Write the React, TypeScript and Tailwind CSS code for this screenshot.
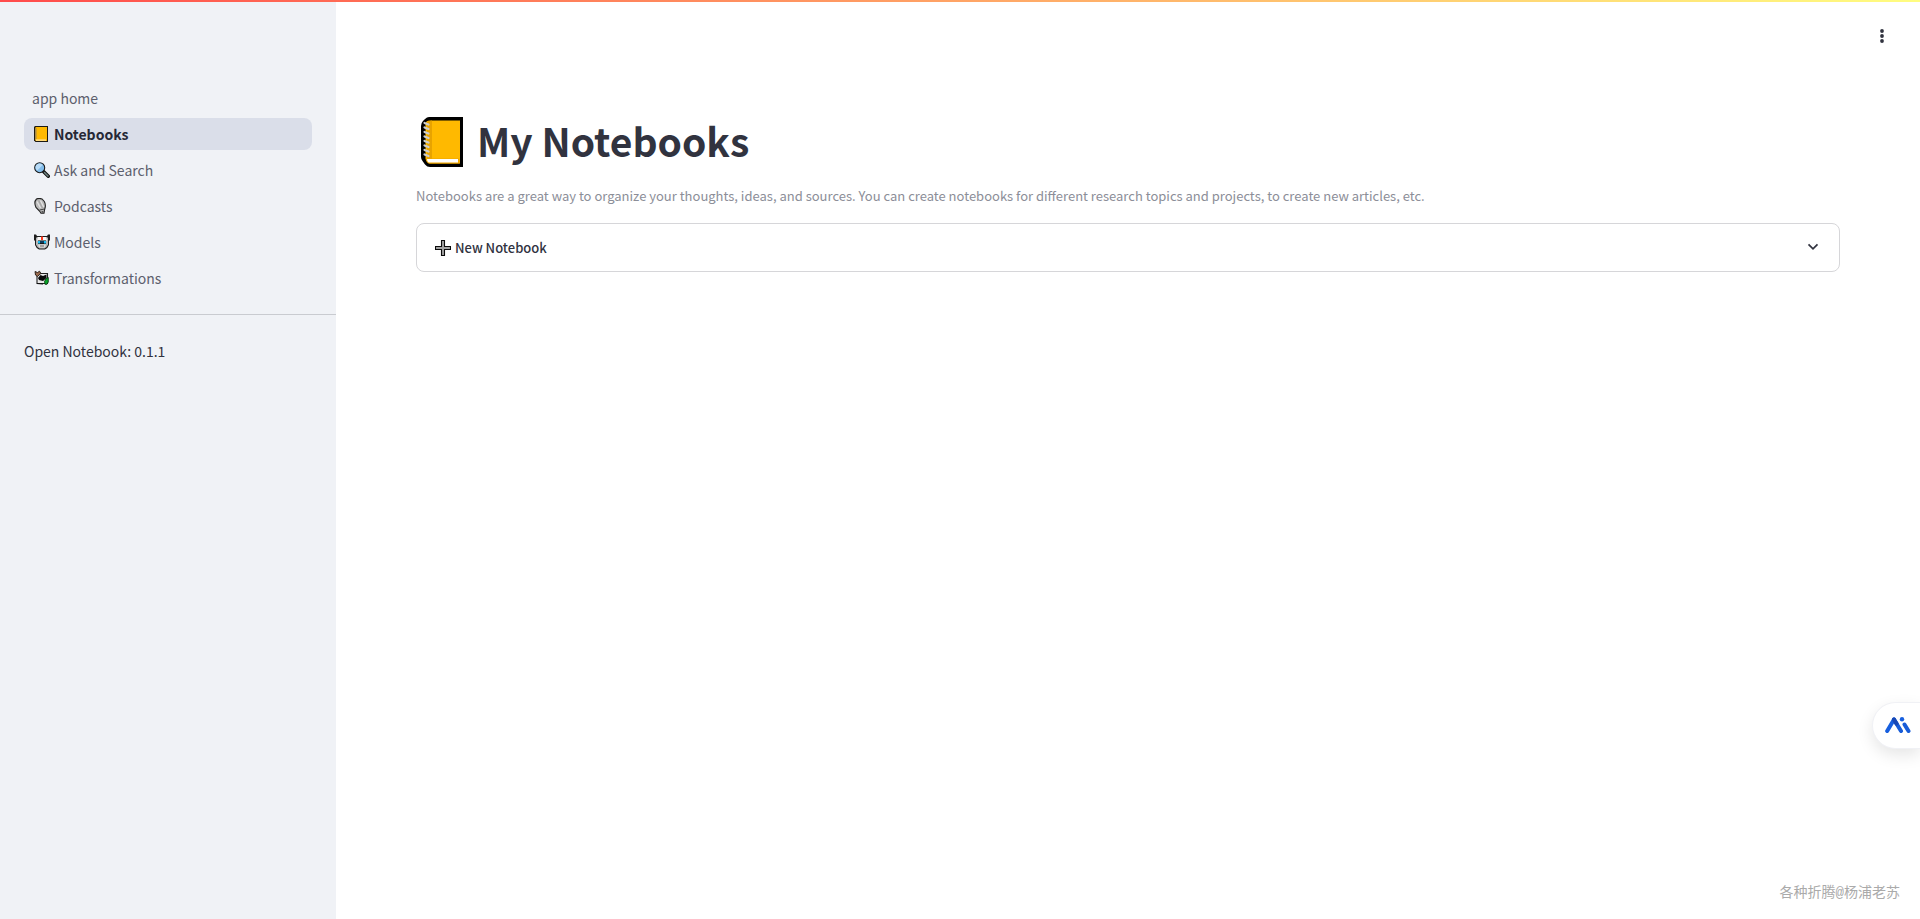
import type { ReactNode } from "react";

function NotebookIcon({ className }: { className: string }) {
  return (
    <svg viewBox="0 0 42 50" className={className} aria-hidden="true">
      <path d="M8 0H42V50H9Q6 50 4 47.500L1.500 44Q0 42 0 40V9Q0 6 2 4L4 2Q6 0 8 0Z" fill="#000" />
      <path d="M9 3.500H39V46.500H9Q7 46.500 6 45L4.500 42V7Q4.500 3.500 9 3.500Z" fill="#ffb900" />
      <path d="M6 4.500L11 3.500V42H6Z" fill="#e8a300" />
      <path d="M5 41.500H38.500V46.500H8Q6 46 5 43Z" fill="#f0a500" />
      <path d="M6 42H37V45.500H7.500Q6 45 6 42Z" fill="#fff" />
      <path d="M3.500 6L7.500 7.500M3.500 10.500L7.500 12M3.500 15L7.500 16.500M3.500 19.500L7.500 21M3.500 24L7.500 25.500M3.500 28.500L7.500 30M3.500 33L7.500 34.500M3.500 37.500L7.500 39" stroke="#cdcdcd" strokeWidth="2.200" strokeLinecap="round" />
    </svg>
  );
}

function SmallNotebookIcon() {
  return (
    <svg viewBox="0 0 16 16" className="h-4 w-4" aria-hidden="true">
      <path d="M1 0H14V16H1.500L0 14.500V1Z" fill="#1c1a14" />
      <path d="M2 1H13V15H2L1 14V2Z" fill="#ffb900" />
      <path d="M1 2H2.500V13.500H1Z" fill="#a88a45" />
      <path d="M2 13.500H12V14.700H2Z" fill="#ffe9b0" />
    </svg>
  );
}

function SearchIcon() {
  return (
    <svg viewBox="0 0 16 16" className="h-4 w-4" aria-hidden="true">
      <path d="M9.500 9.500L14.300 14.300" stroke="#111" strokeWidth="3.400" strokeLinecap="round" />
      <path d="M10.500 10.500L14 14" stroke="#6f8583" strokeWidth="1.500" strokeLinecap="round" />
      <circle cx="5.700" cy="5.700" r="5" fill="#83beec" stroke="#1a1a1a" strokeWidth="1.100" />
      <path d="M1.700 6.500A4 4 0 0 1 8.700 3L3 8.700Z" fill="#b8dcf8" />
    </svg>
  );
}

function PodcastIcon() {
  return (
    <svg viewBox="0 0 16 16" className="h-4 w-4" aria-hidden="true">
      <path d="M2.500 1Q5-.2 8 1L10.300 3.500Q11.800 6 11.200 9.500L10.500 12L10 15.300H7L5.500 13L2 9.500Q-.5 4 2.500 1Z" fill="#b9b9b9" stroke="#222" strokeWidth="1.100" />
      <path d="M3 3.500L6.500 10M6.500 2.500L9.700 9" stroke="#e2e2e2" strokeWidth="1.300" />
      <path d="M4.700 2.500L8.500 10" stroke="#a2a2a2" strokeWidth="1" />
      <path d="M5.500 12L10.500 11" stroke="#333" strokeWidth=".9" />
      <path d="M7.500 13H9.300V14.800H7.700Z" fill="#555" />
    </svg>
  );
}

function RobotIcon() {
  return (
    <svg viewBox="0 0 16 16" className="h-4 w-4" aria-hidden="true">
      <path d="M0 .5H2L3 2H13L14 .5H16V6L15 7V11Q14 14 11 15.500H5Q2 14 1 11V7L0 6Z" fill="#1d1d1d" />
      <path d="M2 4L3 3H13L14 4V10.500Q13 13.500 10.500 14.500H5.500Q3 13.500 2 10.500Z" fill="#b4b4b4" />
      <path d="M4 3H12L13 6.500H3Z" fill="#f8f8f8" />
      <path d="M7 2.500H9V6H7Z" fill="#ff3b1f" />
      <path d="M4 6.500H12V10H4Z" fill="#141414" />
      <path d="M4 7H6V9.500H4ZM10 7H12V9.500H10Z" fill="#18bdf2" />
      <path d="M6 7H10V9H6Z" fill="#0c3a5c" />
      <path d="M4 10.500H12L11 13.500H5Z" fill="#dedede" />
      <path d="M6 12H10" stroke="#666" strokeWidth="1" />
    </svg>
  );
}

function TransformIcon() {
  return (
    <svg viewBox="0 0 16 16" className="h-4 w-4" aria-hidden="true">
      <path d="M3 3.500H13.500V13.500H3Z" fill="#e9e9e9" stroke="#222" strokeWidth="1.100" />
      <path d="M4 8L6.500 5L9 6L12.500 4.500V8L9 11L5 10Z" fill="#080808" />
      <path d="M1 1.500L3.500 2.500L5.500 1.200L7 3.500L5 5L3.500 6.500L1.500 5Z" fill="#97694c" stroke="#201712" strokeWidth=".9" />
      <path d="M10.500 11.500L12 8.500L14.300 7.500V12L13 14.300H11Z" fill="#08a528" stroke="#092e10" strokeWidth=".8" />
      <path d="M3 13.500L9 14" stroke="#111" strokeWidth="1.200" />
    </svg>
  );
}

function PlusIcon() {
  return (
    <svg viewBox="0 0 16 16" className="h-4 w-4" aria-hidden="true">
      <path d="M6.500 .5H9.500V6.500H15.500V9.500H9.500V15.500H6.500V9.500H.5V6.500H6.500Z" fill="#a2a2a2" stroke="#0b0b0b" strokeWidth="1.100" />
    </svg>
  );
}

const pages: { label: string; icon?: ReactNode; active?: boolean }[] = [
  { label: "app home" },
  { label: "Notebooks", icon: <SmallNotebookIcon />, active: true },
  { label: "Ask and Search", icon: <SearchIcon /> },
  { label: "Podcasts", icon: <PodcastIcon /> },
  { label: "Models", icon: <RobotIcon /> },
  { label: "Transformations", icon: <TransformIcon /> },
];

export default function App() {
  return (
    <div className="relative flex min-h-screen bg-white font-['Noto_Sans_CJK_SC','Noto_Sans',sans-serif] text-[#31333f]">
      <div className="absolute inset-x-0 top-0 z-10 h-0.5 bg-linear-to-r/srgb from-[#ff4b4b] to-[#fffd80]" />

      <aside className="w-84 shrink-0 bg-[#f0f2f6] pt-20">
        <nav aria-label="Pages" className="px-6 py-0.5">
          <ul className="flex flex-col gap-1">
            {pages.map((page) => (
              <li key={page.label}>
                <a
                  href="#"
                  aria-current={page.active ? "page" : undefined}
                  className={
                    page.active
                      ? "flex h-8 items-center rounded-lg bg-[#dadee9] px-2 text-sm font-bold text-[#262836]"
                      : "flex h-8 items-center rounded-lg px-2 text-sm text-[#5c5f6d]"
                  }
                >
                  {page.icon && <span className="pr-1 pl-0.5">{page.icon}</span>}
                  <span>{page.label}</span>
                </a>
              </li>
            ))}
          </ul>
        </nav>
        <hr className="mt-4.5 border-[#c9cbd0]" />
        <p className="px-6 pt-6 text-sm leading-6">Open Notebook: 0.1.1</p>
      </aside>

      <div className="flex min-w-0 flex-1 flex-col">
        <header className="flex h-18 items-center justify-end px-6">
          <button type="button" aria-label="Main menu" className="flex h-7 w-7 items-center justify-center">
            <svg viewBox="0 0 16 16" className="h-4 w-4" fill="#31333f" aria-hidden="true">
              <circle cx="8" cy="3" r="1.900" />
              <circle cx="8" cy="8" r="1.900" />
              <circle cx="8" cy="13" r="1.900" />
            </svg>
          </button>
        </header>

        <main className="flex-1 px-20 pt-10">
          <h1 className="flex items-start gap-3.5 pl-[5px] text-[39px] leading-14 font-bold">
            <NotebookIcon className="mt-[5px] h-[50px] w-[42px]" />
            <span>My Notebooks</span>
          </h1>
          <p className="mt-4.5 text-[13px] leading-5 text-[#8c8e98]">
            Notebooks are a great way to organize your thoughts, ideas, and sources. You can create notebooks for
            different research topics and projects, to create new articles, etc.
          </p>
          <button
            type="button"
            aria-expanded="false"
            className="mt-[17px] flex h-[49px] w-full items-center gap-1 rounded-lg border border-[#d6d6d9] px-4.5 text-[13px] font-medium"
          >
            <PlusIcon />
            <span>New Notebook</span>
            <svg viewBox="0 0 16 16" className="ml-auto h-4 w-4" fill="none" aria-hidden="true">
              <path d="M3.500 4.300L8 8.800L12.500 4.300" stroke="#31333f" strokeWidth="1.700" />
            </svg>
          </button>
        </main>
      </div>

      <button
        type="button"
        aria-label="AI assistant"
        className="absolute right-0 bottom-42.5 flex h-[47px] w-12 items-center rounded-l-full border border-r-0 border-[#f0f1f5] bg-white pb-0.5 pl-3 shadow-[0_6px_16px_rgba(0,0,0,0.1)]"
      >
        <svg viewBox="0 0 26 16" className="h-4 w-[26px]" fill="none" strokeLinecap="round" strokeWidth="4" aria-hidden="true">
          <path d="M9 2.500L16 14" stroke="#175cd8" />
          <path d="M2.200 14L9 2.500" stroke="#175fdf" />
          <path d="M9 2.500L11.500 6.600" stroke="#1747b5" />
          <path d="M19.500 7.500L23.500 14" stroke="#175cd8" />
          <circle cx="17" cy="2.200" r="2.200" fill="#175fdf" />
        </svg>
      </button>
      <p className="absolute right-5 bottom-4 font-['Liberation_Mono','Noto_Sans_CJK_SC',monospace] text-sm leading-5 text-[#aaa]">
        各种折腾@杨浦老苏
      </p>
    </div>
  );
}
